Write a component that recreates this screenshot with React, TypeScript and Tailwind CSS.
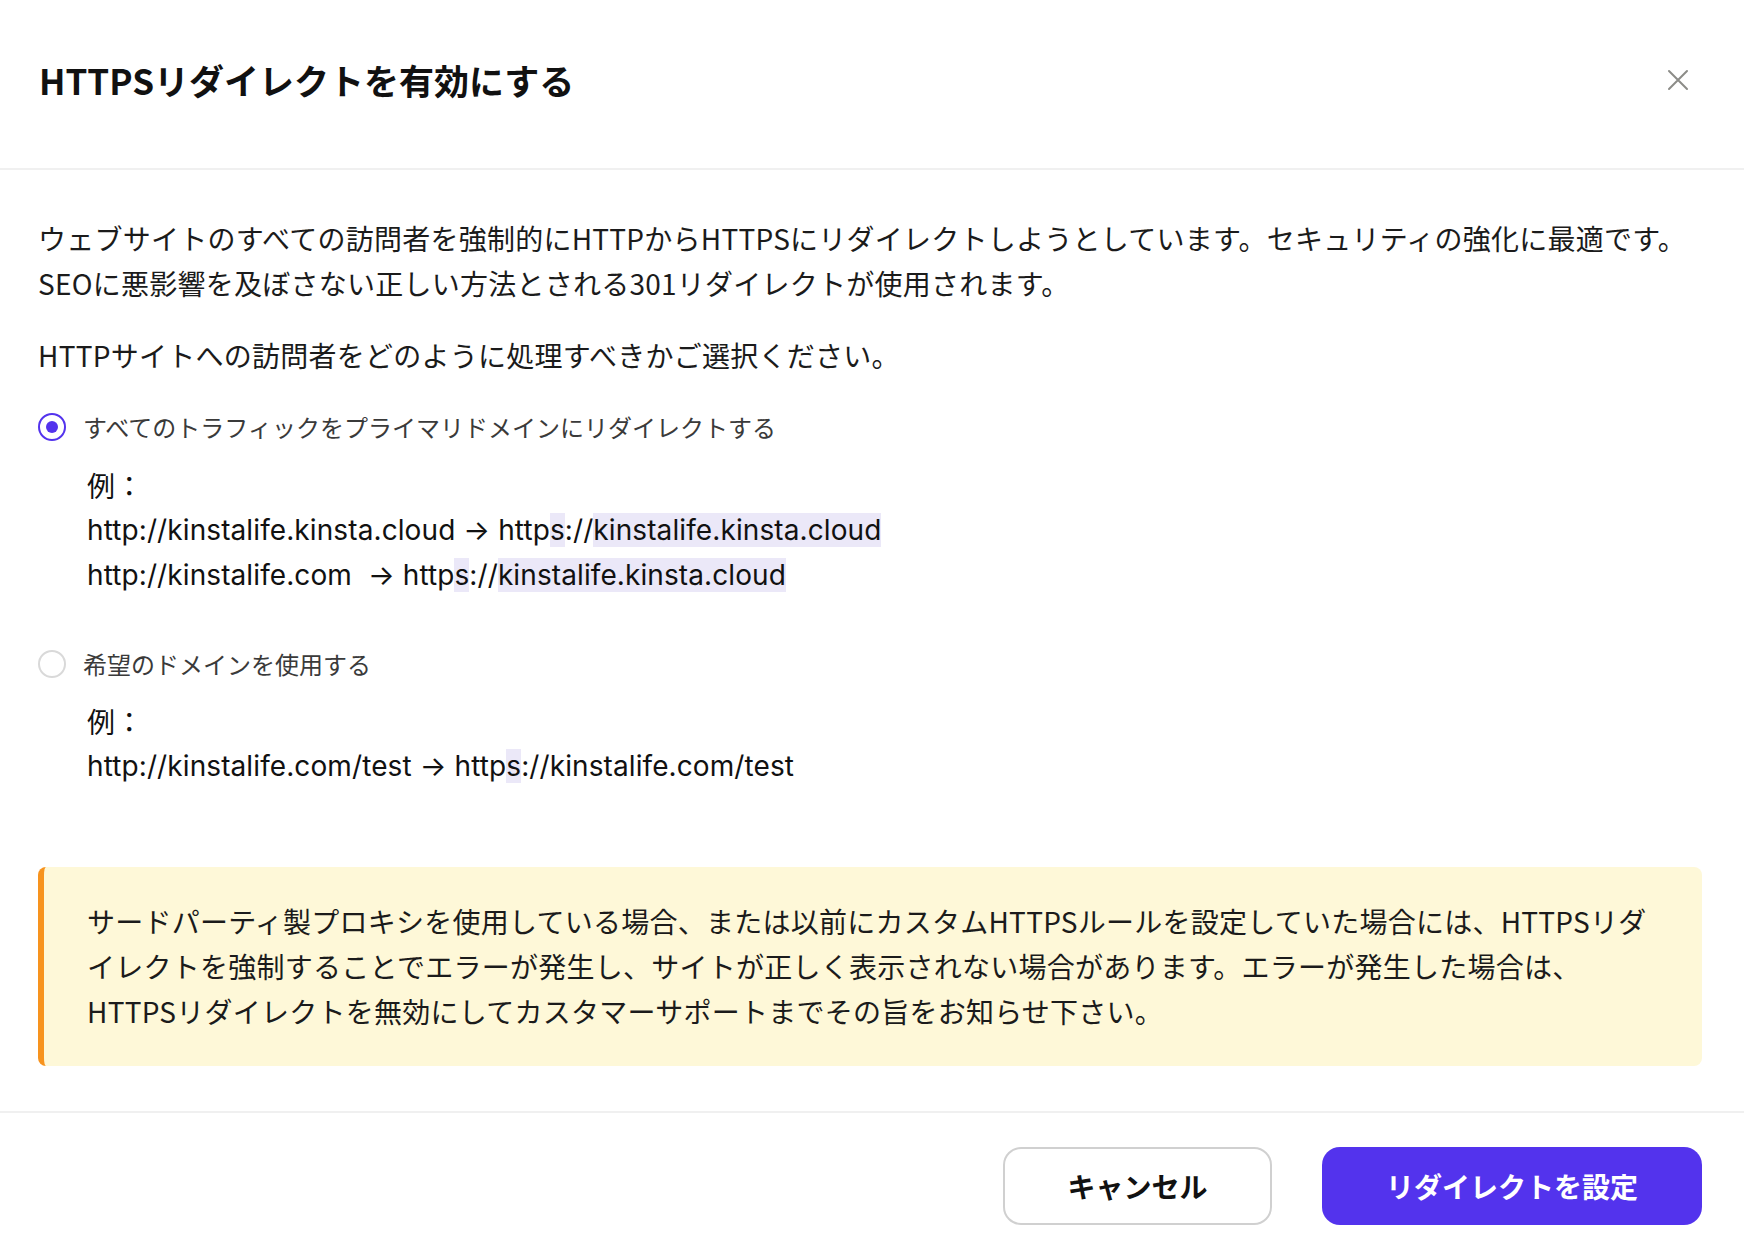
import React, { useState } from "react";

const jp = { fontFamily: "'Noto Sans CJK JP', 'Noto Sans', sans-serif" };
const url = { fontFamily: "Inter, 'Noto Sans CJK JP', sans-serif" };

const Radio: React.FC<{ checked: boolean; onClick: () => void }> = ({ checked, onClick }) => (
  <button
    type="button"
    onClick={onClick}
    className={`w-[28px] h-[28px] rounded-full border-2 flex items-center justify-center shrink-0 ${
      checked ? "border-[#5333ed]" : "border-[#d9d9d9]"
    }`}
  >
    {checked && <span className="w-[12px] h-[12px] rounded-full bg-[#5333ed]" />}
  </button>
);

const Hl: React.FC<{ children: React.ReactNode }> = ({ children }) => (
  <span className="bg-[#ebe8f8]">{children}</span>
);

const App: React.FC = () => {
  const [choice, setChoice] = useState<"primary" | "custom">("primary");

  return (
    <div className="w-[1744px] h-[1256px] bg-white flex flex-col text-[#1b1b1b]" style={jp}>
      {/* Header */}
      <div className="h-[170px] flex items-center justify-between pl-[39px] pr-[55px] pb-[8px] border-b-2 border-[#f0f0f0]">
        <h1 className="text-[35px] font-bold text-[#111]">HTTPSリダイレクトを有効にする</h1>
        <button type="button" aria-label="閉じる" className="w-[22px] h-[22px] flex items-center justify-center">
          <svg width="22" height="22" viewBox="0 0 22 22" fill="none">
            <path d="M2 2L20 20M20 2L2 20" stroke="#8c8c88" strokeWidth="2" strokeLinecap="round" />
          </svg>
        </button>
      </div>

      {/* Body */}
      <div className="flex-1 pl-[38px] pr-[42px] pt-[46px] text-[28px] leading-[44.8px] tracking-[0.25px]">
        <p className="whitespace-nowrap">
          ウェブサイトのすべての訪問者を強制的にHTTPからHTTPSにリダイレクトしようとしています。セキュリティの強化に最適です。
          <br />
          SEOに悪影響を及ぼさない正しい方法とされる301リダイレクトが使用されます。
        </p>
        <p className="mt-[27px] whitespace-nowrap">HTTPサイトへの訪問者をどのように処理すべきかご選択ください。</p>

        {/* Option 1 */}
        <div className="mt-[32px] flex items-center gap-[17px] h-[36px]">
          <Radio checked={choice === "primary"} onClick={() => setChoice("primary")} />
          <span className="text-[24px] leading-[36px] tracking-normal text-[#3a3a3a]">
            すべてのトラフィックをプライマリドメインにリダイレクトする
          </span>
        </div>
        <div className="mt-[18px] pl-[49px] whitespace-nowrap text-[#111]">
          <div>例：</div>
          <div className="tracking-[0.1px]" style={url}>
            http://kinstalife.kinsta.cloud → http<Hl>s</Hl>://<Hl>kinstalife.kinsta.cloud</Hl>
          </div>
          <div className="tracking-[0.1px]" style={url}>
            http://kinstalife.com&nbsp; → http<Hl>s</Hl>://<Hl>kinstalife.kinsta.cloud</Hl>
          </div>
        </div>

        {/* Option 2 */}
        <div className="mt-[48px] flex items-center gap-[17px] h-[36px]">
          <Radio checked={choice === "custom"} onClick={() => setChoice("custom")} />
          <span className="text-[24px] leading-[36px] tracking-normal text-[#3a3a3a]">希望のドメインを使用する</span>
        </div>
        <div className="mt-[17px] pl-[49px] whitespace-nowrap text-[#111]">
          <div>例：</div>
          <div className="tracking-[0.1px]" style={url}>
            http://kinstalife.com/test → http<Hl>s</Hl>://kinstalife.com/test
          </div>
        </div>

        {/* Notice */}
        <div className="mt-[79px] rounded-[8px] border-l-[6px] border-[#f7931e] bg-[#fef8d8] pl-[43px] pr-[32px] py-[32px] whitespace-nowrap">
          サードパーティ製プロキシを使用している場合、または以前にカスタムHTTPSルールを設定していた場合には、HTTPSリダ
          <br />
          イレクトを強制することでエラーが発生し、サイトが正しく表示されない場合があります。エラーが発生した場合は、
          <br />
          HTTPSリダイレクトを無効にしてカスタマーサポートまでその旨をお知らせ下さい。
        </div>
      </div>

      {/* Footer */}
      <div className="border-t-2 border-[#f0f0f0] flex justify-end gap-[50px] pt-[34px] pb-[31px] pr-[42px]">
        <button
          type="button"
          className="w-[269px] h-[78px] rounded-[18px] border-2 border-[#d0d0d0] bg-white text-[28px] font-semibold text-[#111]"
        >
          キャンセル
        </button>
        <button
          type="button"
          className="w-[380px] h-[78px] rounded-[18px] bg-[#5333ed] text-[28px] font-semibold text-white"
        >
          リダイレクトを設定
        </button>
      </div>
    </div>
  );
};

export default App;
